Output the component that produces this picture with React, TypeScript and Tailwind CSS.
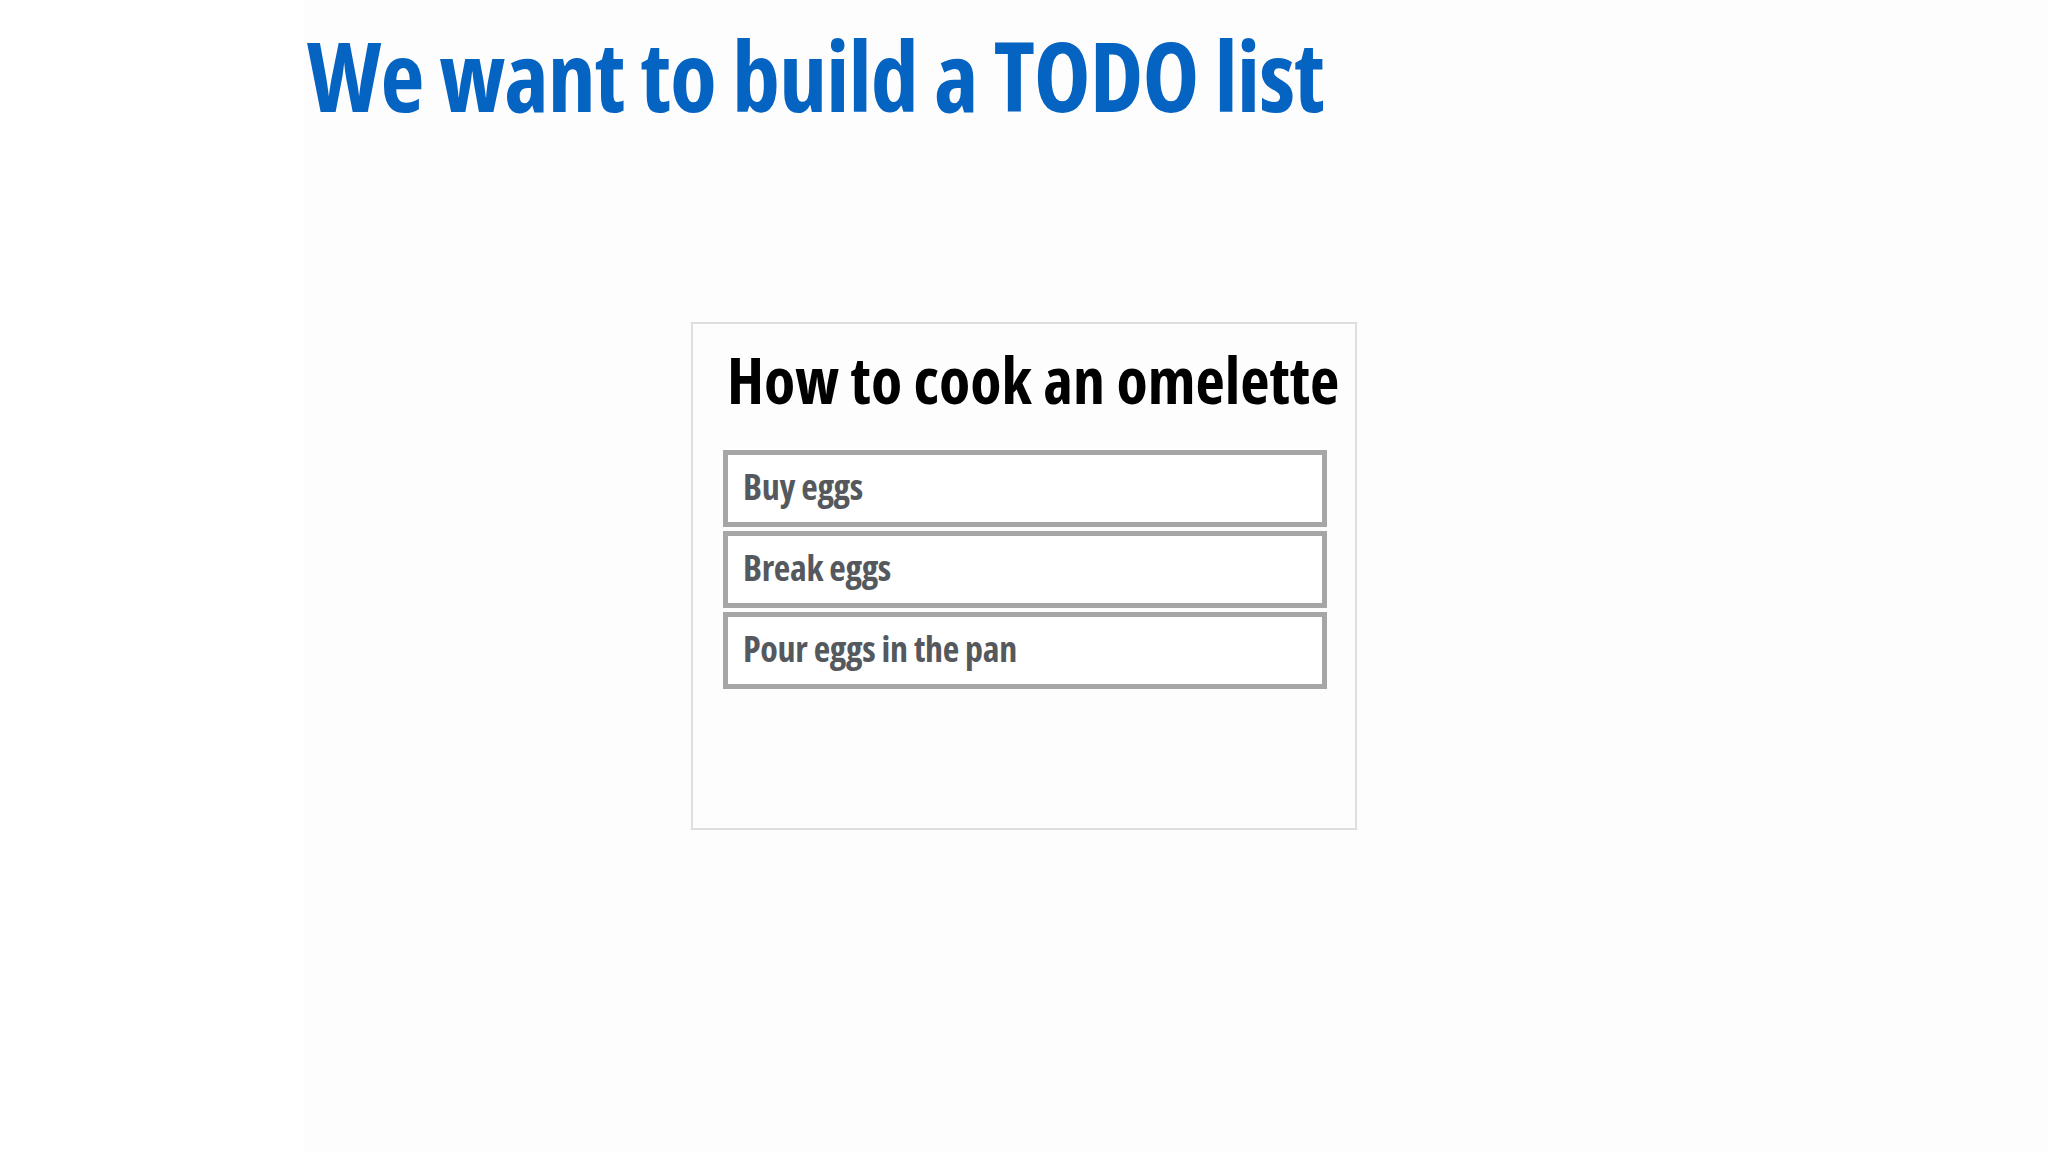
const items = ["Buy eggs", "Break eggs", "Pour eggs in the pan"];

export default function App() {
  return (
    <div
      className="flex h-[1152px] w-[2048px] overflow-hidden bg-white"
      style={{ fontFamily: '"Open Sans", "Liberation Sans", sans-serif' }}
    >
      {/* left margin strip */}
      <div className="w-[304px] shrink-0 bg-white"></div>
      <div className="flex grow flex-col bg-[#fdfdfd]">
        {/* slide title */}
        <h1 className="mt-[22px] ml-[3px] text-[96px] leading-[1.1] font-bold tracking-[-1px] whitespace-nowrap text-[#0563c1] font-stretch-condensed">
          We want to build a TODO list
        </h1>
        {/* todo card */}
        <div className="mt-[194px] ml-[387px] flex h-[508px] w-[666px] flex-col border-2 border-[#dedede] bg-[#fdfdfd]">
          <h2 className="mt-[21px] ml-[34px] text-[64px] leading-[1.1] font-bold whitespace-nowrap text-black font-stretch-condensed">
            How to cook an omelette
          </h2>
          <div className="mt-[35px] ml-[30px] flex w-[604px] flex-col gap-[4px]">
            {items.map((item, index) => (
              <div
                key={`todo/item/${index}`}
                className="flex h-[77px] items-center border-[5px] border-[#a6a6a6] bg-white px-[15px] pb-[3px]"
              >
                <span className="text-[36px] font-bold tracking-[-0.3px] text-[#55595d] font-stretch-condensed">
                  {item}
                </span>
              </div>
            ))}
          </div>
        </div>
      </div>
    </div>
  );
}
